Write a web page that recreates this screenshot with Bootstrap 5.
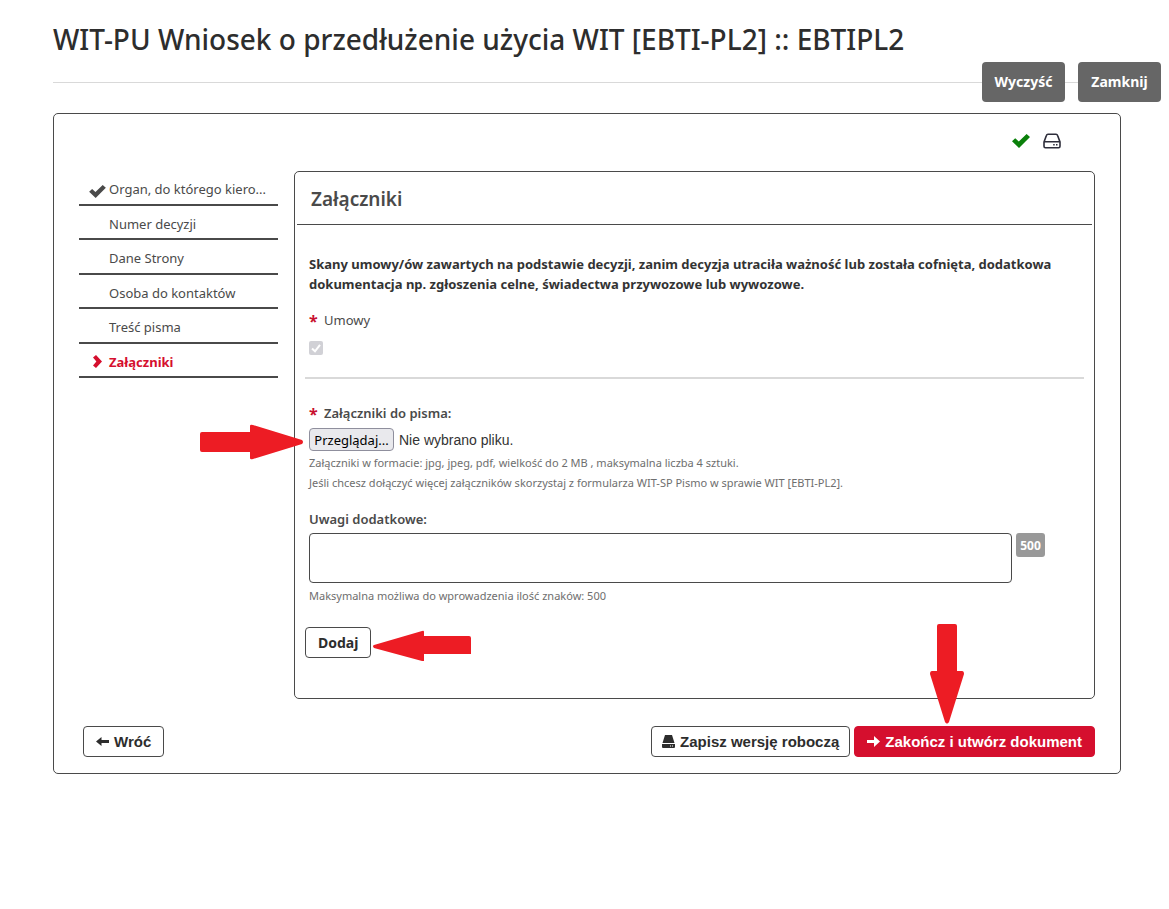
<!DOCTYPE html>
<html lang="pl">
<head>
<meta charset="utf-8">
<meta name="viewport" content="width=device-width, initial-scale=1">
<title>WIT-PU Wniosek o przedłużenie użycia WIT</title>
<link href="https://cdn.jsdelivr.net/npm/bootstrap@5.3.0/dist/css/bootstrap.min.css" rel="stylesheet">
<style>
  body { font-family: "Noto Sans", sans-serif; font-size: 13px; line-height: 20px; color: #4a4a4a; background: #fff; }
  svg { display: block; flex: none; }
  .page-head { padding: 18px 8px 0 53px; }
  .page-title { font-size: 28px; line-height: 42px; font-weight: 500; color: #2d2d2d; }
  .head-actions { margin-top: 2px; height: 40px; }
  .head-rule { height: 1px; background: #d9d9d9; }
  .rule-short { width: 13px; }
  .btn-grey { height: 40px; min-width: 83px; padding: 0 12px 2px; font-size: 14px; font-weight: 700; color: #fff; background: #666; border: 0; border-radius: 4px; }
  .btn-grey:hover { color: #fff; background: #555; }
  .frame { border: 1px solid #4a4a4a; border-radius: 5px; }
  .outer { margin: 11px 48px 0 53px; padding: 18px 25px 16px; }
  .status { gap: 13px; padding-right: 34px; height: 18px; margin-bottom: 21px; }
  .steps { width: 199px; height: 207px; }
  .steps a { border-bottom: 2px solid #4a4a4a; color: #4a4a4a; padding-left: 10px; padding-top: 4px; text-decoration: none; }
  .steps .step-icon { width: 20px; flex: none; }
  .steps a.current { color: #d50f2e; font-weight: 700; }
  .section-title { font-size: 19px; line-height: 28px; font-weight: 600; margin: 0 2px; padding: 13px 14px 11px; border-bottom: 1px solid #4a4a4a; }
  .section-body { padding: 29px 10px 40px; }
  .inset { padding-left: 4px; }
  .intro { color: #333; font-weight: 700; margin-bottom: 16px; }
  .req { color: #c8102e; font-weight: 700; font-size: 16px; width: 15px; height: 20px; line-height: 22px; }
  .strong-label { font-weight: 600; }
  .tick { appearance: none; width: 14px; height: 14px; margin: 11px 0 0; border-radius: 2px; background: #d1d1d6 url("data:image/svg+xml,%3Csvg xmlns='http://www.w3.org/2000/svg' viewBox='0 0 14 14'%3E%3Cpath d='M3 7.5 6 10.3 11 3.8' fill='none' stroke='%23fff' stroke-width='2'/%3E%3C/svg%3E") center / 14px; display: block; }
  .divider { height: 2px; background: #d9d9d9; margin: 22px 0 24px; }
  .file-row { font-family: "Liberation Sans", Arial, sans-serif; font-size: 14px; gap: 5px; margin: 5px 0 2px; color: #333; }
  .btn-browse { width: 85px; height: 23px; padding: 0; font-size: 13px; line-height: 20px; font-family: "Noto Sans", sans-serif; color: #000; background: #e9e9ed; border: 1px solid #8f8f9d; border-radius: 4px; }
  .hint { font-size: 11px; color: #6e6e6e; }
  .notes-hint { margin-top: 3px; }
  .notes { width: 703px; min-width: 0; height: 50px; border: 1px solid #4a4a4a; border-radius: 4px; padding: 4px 6px; resize: none; }
  .counter { width: 29px; height: 24px; line-height: 25px; border-radius: 3px; background: #999; color: #fff; font-size: 12px; font-weight: 700; text-align: center; flex: none; }
  .btn-line, .btn-main { height: 31px; padding: 0 12px; font-size: 14px; line-height: 20px; font-weight: 700; border: 1px solid #4a4a4a; border-radius: 4px; color: #2d2d2d; background: #fff; }
  .btn-main { color: #fff; background: #d50f2e; border-color: #d50f2e; }
  .btn-line:hover { background: #f2f2f2; border-color: #4a4a4a; }
  .btn-main:hover { color: #fff; background: #b80d27; }
  .add-row { margin-top: 21px; }
  .footer-bar { font-family: "Liberation Sans", Arial, sans-serif; padding-left: 4px; margin-top: 27px; gap: 4px; }
  .footer-bar .btn { font-family: inherit; font-size: 15px; gap: 5px; }
  .footer-bar .btn-draft { padding: 0 10px; }
  /* Instruction arrows lie over the form, each tied to the control it marks. */
  .pointer { position: absolute; pointer-events: none; fill: #ed1c24; z-index: 2; }
  .pointer-right { right: 100%; top: 50%; transform: translate(-5px, -50%); margin-top: 2px; }
  .pointer-left { left: 100%; top: 50%; transform: translateY(-50%); margin: 3px 0 0 2px; }
  .pointer-down { bottom: 100%; left: 76px; margin-bottom: 2px; }
</style>
</head>
<body>
<header class="page-head">
  <h1 class="page-title m-0">WIT-PU Wniosek o przedłużenie użycia WIT [EBTI-PL2] :: EBTIPL2</h1>
  <div class="head-actions d-flex align-items-center">
    <div class="head-rule flex-fill"></div>
    <button type="button" class="btn btn-grey">Wyczyść</button>
    <div class="head-rule rule-short"></div>
    <button type="button" class="btn btn-grey">Zamknij</button>
  </div>
</header>

<main class="frame outer">
  <div class="status d-flex justify-content-end align-items-center">
    <svg width="18" height="14" viewBox="0 0 18 14" fill="#0a800a"><path d="M0 7.2 3.2 4.3 6.8 7.6 14.6 0 18 3 7 14Z"/></svg>
    <svg width="18" height="16" viewBox="0 0 18 16" fill="none" stroke="#2d2d3a" stroke-width="1.6"><path d="M1 9 3.4 2.4Q3.8 1.2 5 1.2H13Q14.2 1.2 14.6 2.4L17 9V13.2Q17 14.7 15.6 14.7H2.4Q1 14.7 1 13.2ZM1 8.7H17"/><path d="M10.2 11.8h1.5M13 11.8h1.5"/></svg>
  </div>
  <div class="d-flex align-items-start gap-3">
    <nav class="steps d-flex flex-column flex-shrink-0" aria-label="Kroki formularza">
      <a href="#" class="d-flex align-items-center flex-fill"><span class="step-icon"><svg class="mt-1" width="17" height="13" viewBox="0 0 18 14" fill="#4a4a4a"><path d="M0 7.2 3.2 4.3 6.8 7.6 14.6 0 18 3 7 14Z"/></svg></span>Organ, do którego kiero...</a>
      <a href="#" class="d-flex align-items-center flex-fill"><span class="step-icon"></span>Numer decyzji</a>
      <a href="#" class="d-flex align-items-center flex-fill"><span class="step-icon"></span>Dane Strony</a>
      <a href="#" class="d-flex align-items-center flex-fill"><span class="step-icon"></span>Osoba do kontaktów</a>
      <a href="#" class="d-flex align-items-center flex-fill"><span class="step-icon"></span>Treść pisma</a>
      <a href="#" class="current d-flex align-items-center flex-fill" aria-current="step"><span class="step-icon"><svg class="ms-1" width="9" height="13" viewBox="0 0 9 13" fill="#d50f2e"><path d="M0 2.4 3 0 9 6.5 3 13 0 10.6 3.4 6.5Z"/></svg></span>Załączniki</a>
    </nav>

    <section class="frame flex-fill">
      <h2 class="section-title">Załączniki</h2>
      <form class="section-body">
        <div class="inset">
          <p class="intro">Skany umowy/ów zawartych na podstawie decyzji, zanim decyzja utraciła ważność lub została cofnięta, dodatkowa dokumentacja np. zgłoszenia celne, świadectwa przywozowe lub wywozowe.</p>
          <label for="umowy" class="d-flex"><span class="req">*</span>Umowy</label>
          <input id="umowy" type="checkbox" class="tick" checked disabled>
        </div>
        <div class="divider"></div>
        <div class="inset">
          <label for="plik" class="strong-label d-flex"><span class="req">*</span>Załączniki do pisma:</label>
          <div class="file-row d-flex align-items-center position-relative">
            <svg class="pointer pointer-right" width="104" height="36" viewBox="0 0 104 36"><path d="M2 8H50V2Q50 0 53 1L102 16Q104 18 102 20L53 35Q50 36 50 34V28H2Q0 28 0 26V10Q0 8 2 8Z"/></svg>
            <button type="button" class="btn-browse" onclick="document.getElementById('plik').click()">Przeglądaj...</button>
            <input id="plik" type="file" class="d-none">
            <span>Nie wybrano pliku.</span>
          </div>
          <div class="hint">
            <div>Załączniki w formacie: jpg, jpeg, pdf, wielkość do 2 MB , maksymalna liczba 4 sztuki.</div>
            <div>Jeśli chcesz dołączyć więcej załączników skorzystaj z formularza WIT-SP Pismo w sprawie WIT [EBTI-PL2].</div>
          </div>
          <label for="uwagi" class="strong-label d-block mt-3">Uwagi dodatkowe:</label>
          <div class="d-flex gap-1 mt-1">
            <textarea id="uwagi" class="notes" maxlength="500"></textarea>
            <span class="counter">500</span>
          </div>
          <div class="hint notes-hint">Maksymalna możliwa do wprowadzenia ilość znaków: 500</div>
        </div>
        <div class="add-row d-flex">
          <div class="position-relative">
            <button type="button" class="btn btn-line d-block">Dodaj</button>
            <svg class="pointer pointer-left" width="98" height="32" viewBox="0 0 98 32"><path d="M1 15 49 1Q51 0 51 2V6H96Q98 6 98 8V24H51V31L49 31 1 18Q-1 16 1 15Z"/></svg>
          </div>
        </div>
      </form>
    </section>
  </div>

  <div class="footer-bar d-flex">
    <button type="button" class="btn btn-line d-flex align-items-center me-auto"><svg width="13" height="9" viewBox="0 0 13 9" fill="#2d2d2d"><path d="M0 4.5 5.5 0V3H13V6H5.5V9Z"/></svg>Wróć</button>
    <button type="button" class="btn btn-line btn-draft d-flex align-items-center"><svg width="13" height="13" viewBox="0 0 13 13" fill="#2d2d2d"><path d="M3 0H10L12.5 8H.5ZM0 9H13V12Q13 13 12 13H1Q0 13 0 12Z"/><path fill="#fff" d="M8 10.5h1v1H8zM10 10.5h1v1h-1z"/></svg>Zapisz wersję roboczą</button>
    <div class="position-relative">
      <svg class="pointer pointer-down" width="34" height="100" viewBox="0 0 34 100"><path d="M9 0H25Q27 0 27 2V47H32Q34 47 34 50L19 98Q17 101 15 98L0 50Q0 47 2 47H7V2Q7 0 9 0Z"/></svg>
      <button type="button" class="btn btn-main d-flex align-items-center"><svg width="13" height="11" viewBox="0 0 13 11" fill="#fff"><path d="M13 5.5 7 0V4H0V7H7V11Z"/></svg>Zakończ i utwórz dokument</button>
    </div>
  </div>
</main>
<script src="https://cdn.jsdelivr.net/npm/bootstrap@5.3.0/dist/js/bootstrap.bundle.min.js"></script>
</body>
</html>
